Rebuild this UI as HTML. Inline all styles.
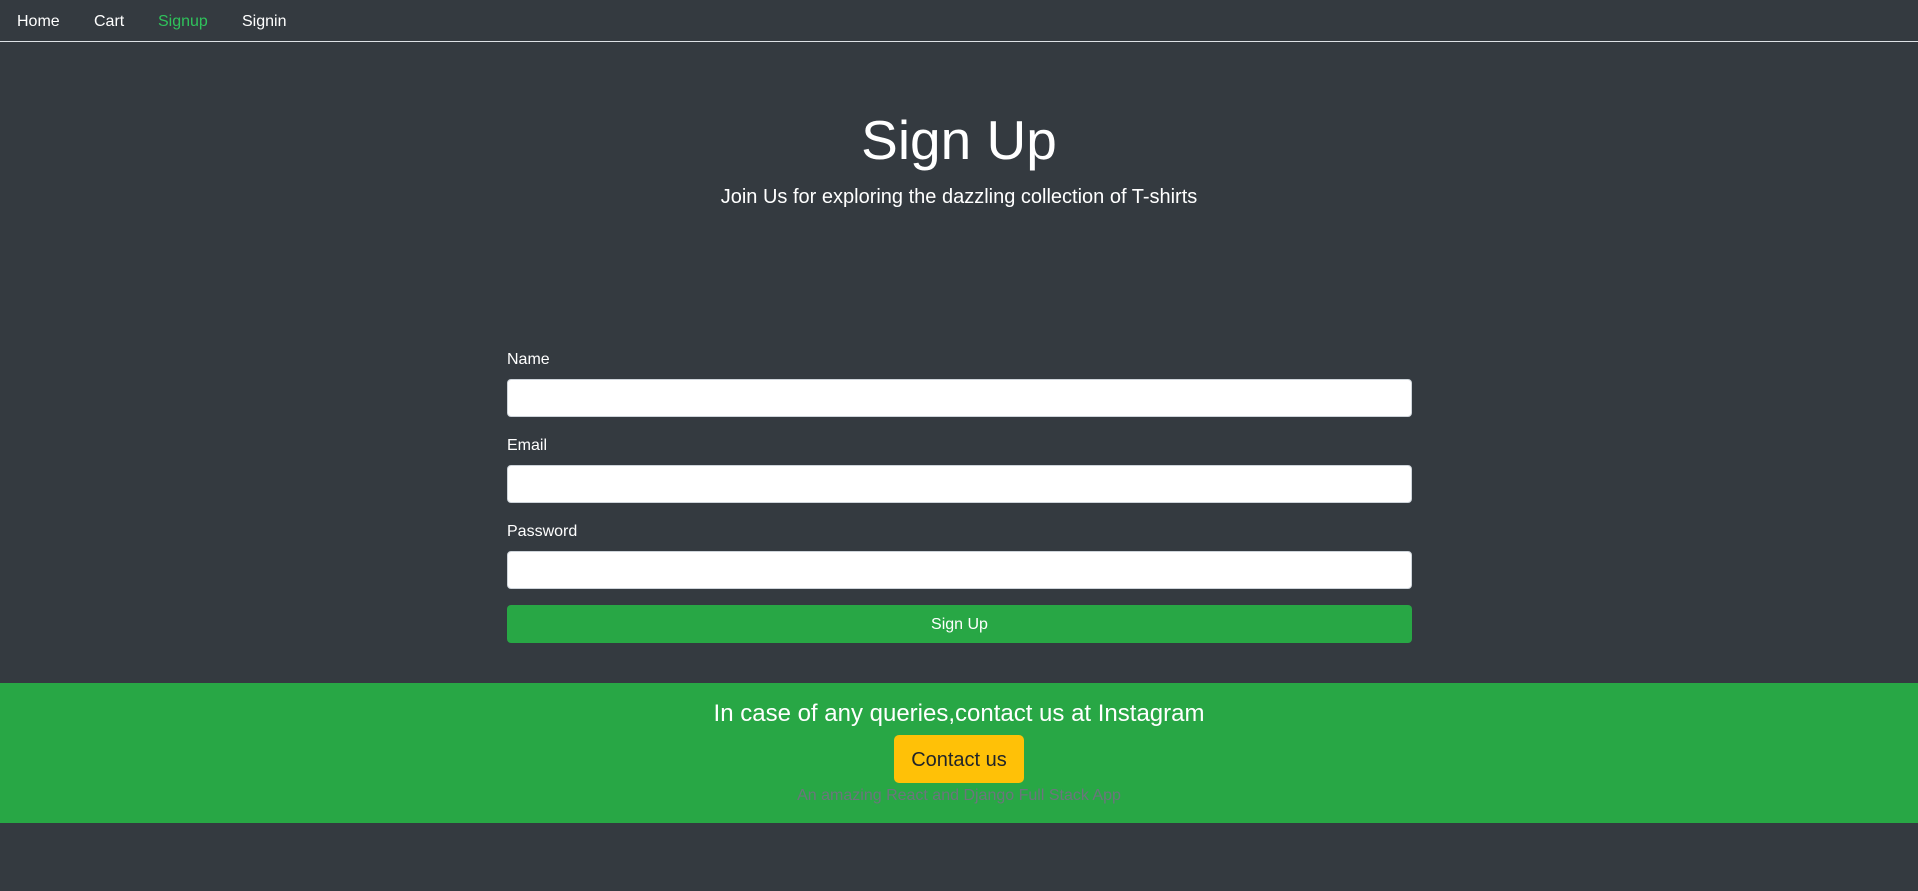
<!DOCTYPE html>
<html><head><meta charset="utf-8"><style>
*{box-sizing:border-box;margin:0;padding:0}
html,body{width:1918px;height:891px;background:#343a40;font-family:"Liberation Sans",sans-serif;color:#fff;overflow:hidden;position:relative}
.nav{position:absolute;top:0;left:0;width:1918px;height:42px;border-bottom:1px solid #dee2e6}
.nav span{position:absolute;top:12px;font-size:16px;line-height:20px}
.t{position:absolute;left:0;width:1918px;text-align:center;white-space:nowrap}
.lab{position:absolute;left:507px;font-size:16px;line-height:20px}
.inp{position:absolute;left:507px;width:905px;height:38px;background:#fff;border:1px solid #ced4da;border-radius:4px}
.btn{position:absolute;left:507px;width:905px;height:38px;background:#28a745;border-radius:4px;text-align:center;line-height:40px;font-size:16px}
.foot{position:absolute;left:0;top:683px;width:1918px;height:140px;background:#28a745}
</style></head><body>
<div class="nav">
<span style="left:17px">Home</span>
<span style="left:94px">Cart</span>
<span style="left:158px;color:#2fc25b">Signup</span>
<span style="left:242px">Signin</span>
</div>
<div class="t" style="top:108px;font-size:55px;line-height:64px">Sign Up</div>
<div class="t" style="top:185px;font-size:20px;line-height:24px">Join Us for exploring the dazzling collection of T-shirts</div>
<div class="lab" style="top:350px">Name</div>
<div class="inp" style="top:379px"></div>
<div class="lab" style="top:436px">Email</div>
<div class="inp" style="top:465px"></div>
<div class="lab" style="top:522px">Password</div>
<div class="inp" style="top:551px"></div>
<div class="btn" style="top:605px">Sign Up</div>
<div class="foot">
<div class="t" style="top:17px;font-size:24px;line-height:28px">In case of any queries,contact us at Instagram</div>
<div style="position:absolute;left:894px;top:52px;width:130px;height:48px;background:#ffc107;border-radius:5px;color:#212529;font-size:20px;line-height:50px;text-align:center">Contact us</div>
<div class="t" style="top:103px;font-size:16px;line-height:20px;color:#6c757d">An amazing React and Django Full Stack App</div>
</div>
</body></html>
